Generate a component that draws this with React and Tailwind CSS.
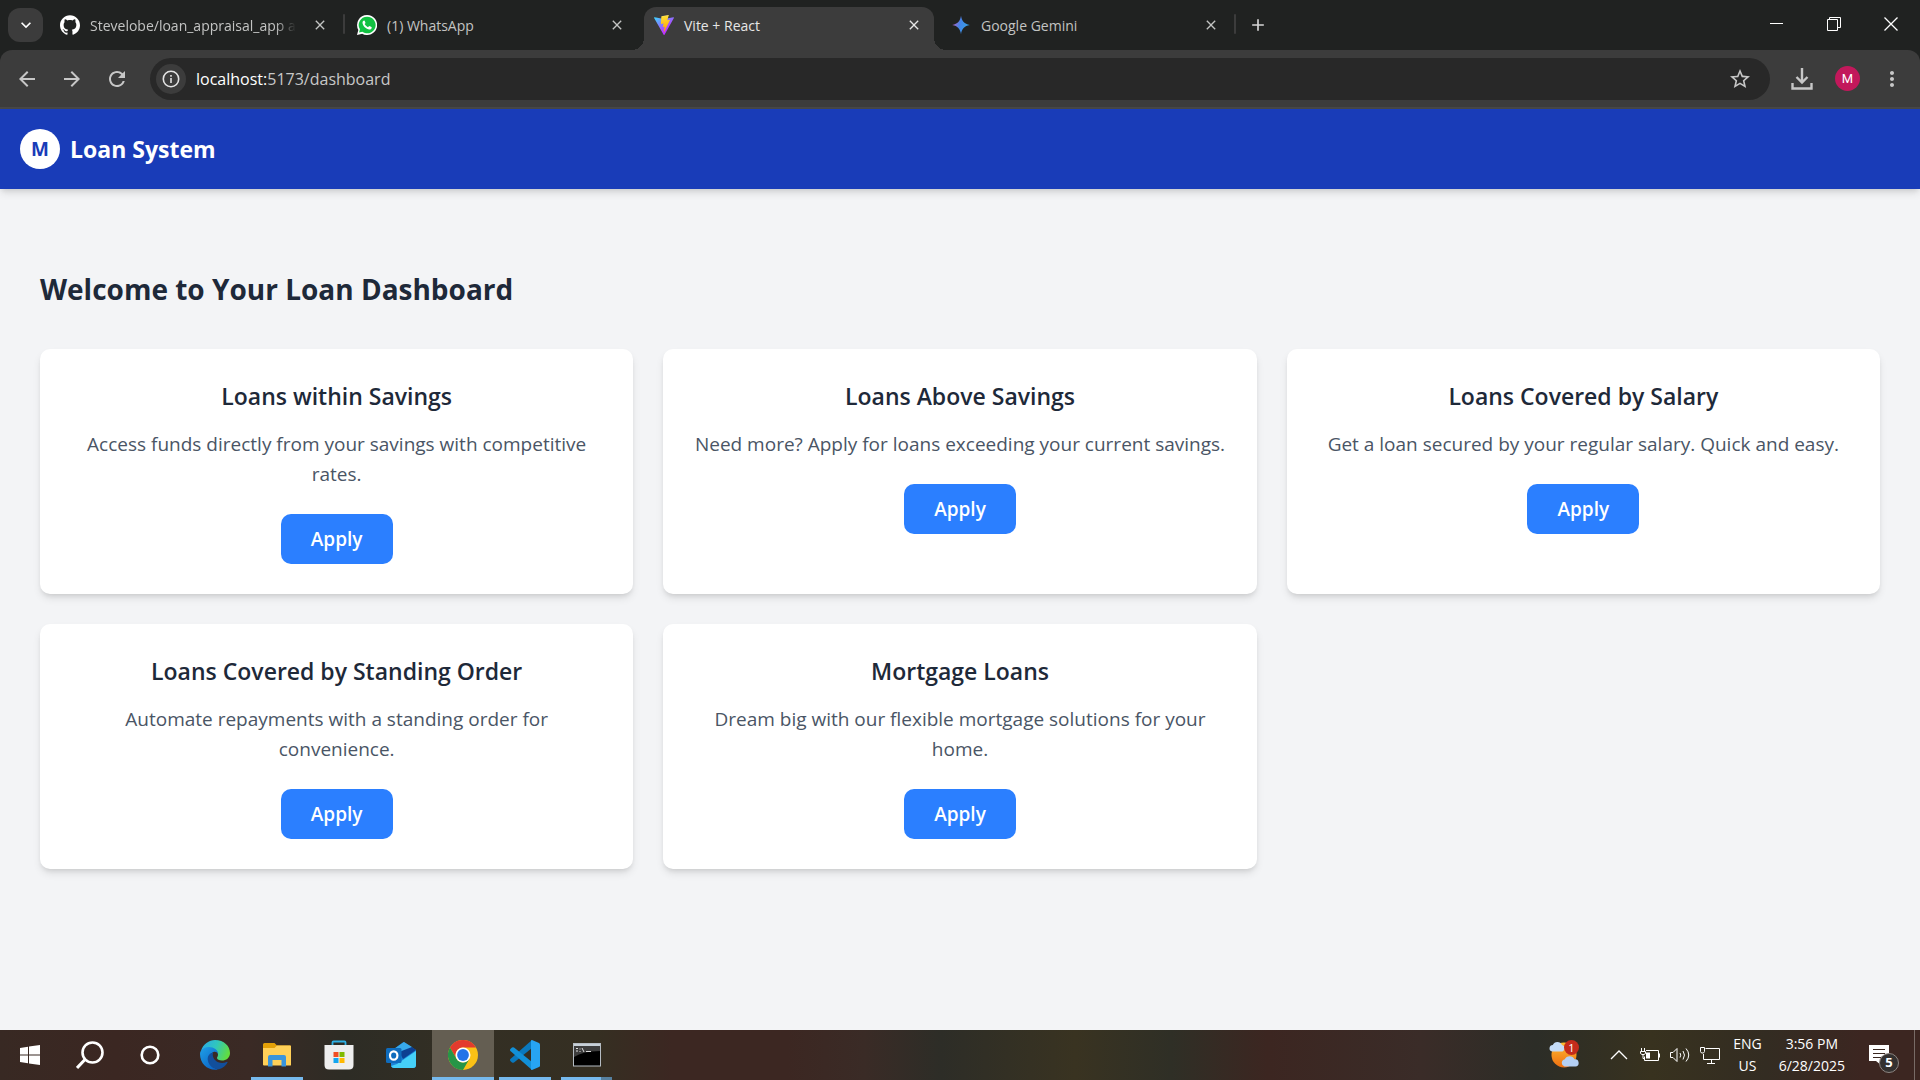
import React from "react";
import { SiGithub } from "react-icons/si";
import { MdArrowBack, MdArrowForward, MdRefresh, MdStarOutline, MdMoreVert, MdClose, MdAdd, MdExpandMore } from "react-icons/md";

const tabs = [
  { title: "Stevelobe/loan_appraisal_app a", icon: "github", divider: true },
  { title: "(1) WhatsApp", icon: "whatsapp" },
  { title: "Vite + React", icon: "vite", active: true },
  { title: "Google Gemini", icon: "gemini", divider: true },
];

const loans = [
  { title: "Loans within Savings", text: "Access funds directly from your savings with competitive rates." },
  { title: "Loans Above Savings", text: "Need more? Apply for loans exceeding your current savings." },
  { title: "Loans Covered by Salary", text: "Get a loan secured by your regular salary. Quick and easy." },
  { title: "Loans Covered by Standing Order", text: "Automate repayments with a standing order for convenience." },
  { title: "Mortgage Loans", text: "Dream big with our flexible mortgage solutions for your home." },
];

function Favicon({ name }) {
  if (name === "github") return <SiGithub className="size-5 shrink-0 text-white" />;
  if (name === "whatsapp")
    return (
      <svg viewBox="0 0 24 24" className="size-5 shrink-0">
        <path d="M12 0a12 12 0 0 0-10.400 17.900L0 24l6.200-1.600A12 12 0 1 0 12 0z" fill="#fff" />
        <path d="M12 2a10 10 0 0 0-8.500 15.200l-1 3.900 4-1A10 10 0 1 0 12 2z" fill="#12c142" />
        <path d="M8.500 6.500c-.5 0-1.900.9-1.900 2.900 0 3.400 4.700 8.100 8.100 8.100 1.900 0 3-1.300 3-2.500 0-.5-2.700-1.800-3-1.800-.4 0-1 1.400-1.500 1.400-.9 0-4-2.800-4-3.700 0-.5 1-.9 1-1.400 0-.4-.8-3-1.700-3z" fill="#fff" />
      </svg>
    );
  if (name === "vite")
    return (
      <svg viewBox="0 0 256 257" className="size-5 shrink-0">
        <defs>
          <linearGradient id="viteA" x1="-.8%" x2="57.600%" y1="7.700%" y2="78.400%">
            <stop offset="0%" stopColor="#41d1ff" />
            <stop offset="100%" stopColor="#bd34fe" />
          </linearGradient>
          <linearGradient id="viteB" x1="43.400%" x2="50.300%" y1="2.200%" y2="89%">
            <stop offset="0%" stopColor="#ffea83" />
            <stop offset="8.300%" stopColor="#ffdd35" />
            <stop offset="100%" stopColor="#ffa800" />
          </linearGradient>
        </defs>
        <path fill="url(#viteA)" d="M255.153 37.938L134.897 252.976c-2.483 4.440-8.862 4.466-11.382.048L.875 37.958c-2.746-4.814 1.371-10.646 6.827-9.670l120.385 21.517a6.537 6.537 0 0 0 2.322-.004l117.867-21.483c5.438-.991 9.574 4.796 6.877 9.620z" />
        <path fill="url(#viteB)" d="M185.432.063L96.440 17.501a3.268 3.268 0 0 0-2.634 3.014l-5.474 92.456a3.268 3.268 0 0 0 3.997 3.378l24.777-5.718c2.318-.535 4.413 1.507 3.936 3.838l-7.361 36.047c-.495 2.426 1.782 4.500 4.151 3.780l15.304-4.649c2.372-.720 4.652 1.360 4.150 3.788l-11.698 56.621c-.732 3.542 3.979 5.473 5.943 2.437l1.313-2.028 72.516-144.720c1.215-2.423-.880-5.186-3.540-4.672l-25.505 4.922c-2.396.462-4.435-1.770-3.759-4.114l16.646-57.705c.677-2.350-1.370-4.583-3.769-4.113z" />
      </svg>
    );
  return (
    <svg viewBox="0 0 24 24" className="size-5 shrink-0">
      <defs>
        <linearGradient id="gem" x1="0" x2="1" y1=".3" y2=".6">
          <stop offset="0.100" stopColor="#a866c8" />
          <stop offset=".45" stopColor="#4285e8" />
          <stop offset="1" stopColor="#35a3e0" />
        </linearGradient>
      </defs>
      <path d="M12 1c.9 6 4 10.100 10.500 11C16 12.900 12.900 17 12 23 11.100 17 8 12.900 1.500 12 8 11.100 11.100 7 12 1z" fill="url(#gem)" />
    </svg>
  );
}

function Tab({ tab }) {
  return (
    <div className="relative flex w-[297px] shrink-0 pr-[7px]">
      <div
        className={
          tab.active
            ? "relative flex min-w-0 flex-1 items-center rounded-t-xl bg-[#3c3c3c] px-[10px] pb-[7px] text-[#e6e6e6]"
            : "flex min-w-0 flex-1 items-center px-[10px] pb-[7px] text-[#c3c4c3]"
        }
      >
        {tab.active && (
          <>
            <span className="absolute bottom-0 -left-3 size-3 bg-[radial-gradient(circle_at_0_0,transparent_12px,#3c3c3c_12px)]" />
            <span className="absolute -right-3 bottom-0 size-3 bg-[radial-gradient(circle_at_100%_0,transparent_12px,#3c3c3c_12px)]" />
          </>
        )}
        <Favicon name={tab.icon} />
        <span
          className={
            tab.icon === "github"
              ? "ml-[10px] whitespace-nowrap [mask-image:linear-gradient(90deg,#000_90%,transparent)]"
              : "ml-[10px] whitespace-nowrap"
          }
        >
          {tab.title}
        </span>
        <button aria-label={"Close " + tab.title} className="ml-auto flex size-5 shrink-0 items-center justify-center">
          <MdClose className="size-4" />
        </button>
      </div>
      {tab.divider && <span className="absolute top-[7px] right-[2px] h-5 w-[2px] rounded bg-[#3c3c3c]" />}
    </div>
  );
}

function BrowserChrome() {
  return (
    <div className="bg-[#202221]">
      <div className="flex h-[50px] items-stretch pt-[7px] text-[14px]">
        <button aria-label="Search tabs" className="mt-px mr-[7px] ml-2 flex h-[34px] w-[35px] items-center justify-center rounded-xl bg-[#3c3c3c] text-white">
          <MdExpandMore className="size-5" />
        </button>
        {tabs.map((t) => (
          <Tab key={t.title} tab={t} />
        ))}
        <button aria-label="New tab" className="ml-[6px] mb-[7px] flex w-7 items-center justify-center text-[#d5d5d5]">
          <MdAdd className="size-5" />
        </button>
        <div className="mr-px mb-[9px] ml-auto flex items-center text-white">
          <button aria-label="Minimize" className="flex h-8 w-[57px] items-center justify-center">
            <svg viewBox="0 0 14 14" className="size-[14px]"><path d="M0 6.500h13" stroke="currentColor" /></svg>
          </button>
          <button aria-label="Restore" className="flex h-8 w-[57px] items-center justify-center">
            <svg viewBox="0 0 14 14" className="size-[14px]" fill="none" stroke="currentColor"><path d="M.5 2.500h10v11H.5zM2.500 2.500v-2h11v10h-3" /></svg>
          </button>
          <button aria-label="Close window" className="flex h-8 w-[57px] items-center justify-center">
            <svg viewBox="0 0 14 14" className="size-[14px]"><path d="M.5.5l13 13M13.500.5l-13 13" stroke="currentColor" strokeWidth="1.300" /></svg>
          </button>
        </div>
      </div>
      <div className="flex h-[59px] items-center rounded-t-xl border-b-2 border-[#474747] bg-[#3c3c3c] pl-[15px] text-[#c7c7c7]">
        <button aria-label="Back" className="mr-[21px]"><MdArrowBack className="size-6" /></button>
        <button aria-label="Forward" className="mr-[21px]"><MdArrowForward className="size-6" /></button>
        <button aria-label="Reload" className="mr-[21px]"><MdRefresh className="size-6" /></button>
        <div className="flex h-[42px] min-w-0 flex-1 items-center rounded-full bg-[#282828] pr-[18px] pl-[6px]">
          <button aria-label="Site information" className="flex size-[30px] shrink-0 items-center justify-center rounded-full bg-[#3c3c3c] text-[#e3e3e3]">
            <svg viewBox="0 0 18 18" className="size-[18px]" fill="none" stroke="currentColor" strokeWidth="1.600">
              <circle cx="9" cy="9" r="7.700" />
              <path d="M9 8v5M9 5v1.700" />
            </svg>
          </button>
          <a href="#dashboard" className="ml-[10px] flex-1 text-[16px]">
            <span className="text-white">localhost:</span>5173/dashboard
          </a>
          <button aria-label="Bookmark"><MdStarOutline className="size-6" /></button>
        </div>
        <button aria-label="Downloads" className="ml-5">
          <svg viewBox="0 0 24 24" className="size-6" fill="none" stroke="currentColor" strokeWidth="2.400">
            <path d="M12 1v14M6.500 10l5.500 5.500 5.500-5.500M2.500 16v5.500h19V16" />
          </svg>
        </button>
        <button aria-label="Profile" className="ml-[21px] flex size-[25px] items-center justify-center rounded-full bg-[#c2185b] font-['Roboto',sans-serif] text-[13px] text-white">M</button>
        <button aria-label="Menu" className="mr-4 ml-5"><MdMoreVert className="size-6" /></button>
      </div>
    </div>
  );
}

function LoanCard({ title, text }) {
  return (
    <article className="rounded-[10px] bg-white p-[30px] text-center shadow-[0_5px_8px_-1px_rgba(0,0,0,0.1),0_3px_5px_-2px_rgba(0,0,0,0.1)]">
      <h2 className="mb-[15px] text-[23px] leading-[35px] font-semibold text-[#1e2939]">{title}</h2>
      <p className="mb-[25px] text-[19px] leading-[30px] text-[#4a5565]">{text}</p>
      <button className="rounded-[10px] bg-[#2b7fff] px-[30px] py-[10px] text-[19px] leading-[30px] font-semibold text-white">Apply</button>
    </article>
  );
}

function EdgeIcon() {
  return (
    <svg viewBox="0 0 30 30" className="size-[30px]">
      <defs>
        <linearGradient id="edgeTop" x1="0" x2="1" y1=".2" y2=".5">
          <stop offset="0" stopColor="#2aa9e8" />
          <stop offset=".5" stopColor="#30c6bd" />
          <stop offset="1" stopColor="#62dd3e" />
        </linearGradient>
        <linearGradient id="edgeLow" x1="0" x2=".8" y1="0" y2="1">
          <stop offset="0" stopColor="#1fa0e8" />
          <stop offset="1" stopColor="#0b62c4" />
        </linearGradient>
      </defs>
      <path d="M1 11C3 4 9 0 15 0c9 0 15 6 15 13 0 5-4 7.500-8 7.500-3 0-5-1-5-2.500 0-1 1-1.500 1-3.500 0-3-3-6-8-6-4 0-7 1-9 2.500z" fill="url(#edgeTop)" />
      <path d="M0 14c0-4 4-7 9-7s9 3 9.200 7c-1-2-3-2.500-4.700-2-3 1-4.500 4-4 8 .5 4 4 8 8.500 9.500C8 31 0 24 0 14z" fill="url(#edgeLow)" />
      <path d="M13 12.500c-4 1-6 4-5 8.500 1 5 6 8.500 11 8.200 3.500-1 7-3.500 8.500-6.700.3-.8-.3-1-1-.6-5 2.400-12 .4-13.500-5.400-.4-1.500 0-3 0-4z" fill="#124f9c" />
    </svg>
  );
}

function ExplorerIcon() {
  return (
    <svg viewBox="0 0 28 24" className="h-6 w-7">
      <path d="M0 1.500Q0 0 1.500 0h10L14 2.500H27q1 0 1 1V22H0z" fill="#e3a008" />
      <path d="M0 5h11.500L14 2.500H27q1 0 1 1V22q0 .5-1 .5H1q-1 0-1-1z" fill="#ffd058" />
      <path d="M5 23.500V14q0-2 2-2h14q2 0 2 2v9.500h-4.500V17h-9v6.500z" fill="#3a95dc" />
    </svg>
  );
}

function StoreIcon() {
  return (
    <svg viewBox="0 0 30 30" className="size-[30px]">
      <path d="M8.500 6V2.500q0-1 1-1h11q1 0 1 1V6" fill="none" stroke="#2fb1e6" strokeWidth="1.800" />
      <path d="M.5 5h29v20q0 4.500-4.500 4.500H5Q.5 29.500.5 25z" fill="#eee" />
      <path d="M9.500 12h5v5h-5z" fill="#f04e23" />
      <path d="M15.500 12h5v5h-5z" fill="#7fba00" />
      <path d="M9.500 18h5v5h-5z" fill="#12a5f0" />
      <path d="M15.500 18h5v5h-5z" fill="#ffb901" />
    </svg>
  );
}

function OutlookIcon() {
  return (
    <svg viewBox="0 0 30 30" className="size-[30px]">
      <path d="M5 11L17.500 2 30 10v15q0 3-3 3H8q-3 0-3-3z" fill="#1b83d8" />
      <path d="M8 9l10-7 8 5-11 9z" fill="#38a9ea" />
      <path d="M13 12l13-5 4 3-13 9z" fill="#0d3f91" />
      <path d="M11 24l19-13v14q0 3-3 3H8q-2 0-3-2z" fill="#45d0f8" />
      <rect y="8" width="15.500" height="15" rx="1.500" fill="#0f6cbd" />
      <ellipse cx="7.700" cy="15.500" rx="3.700" ry="4.200" fill="none" stroke="#fff" strokeWidth="2.200" />
    </svg>
  );
}

function ChromeIcon() {
  return (
    <svg viewBox="0 0 30 30" className="size-[30px]">
      <circle cx="15" cy="15" r="15" fill="#fbc116" />
      <path d="M2 7.500A15 15 0 0 1 28 7.500H15a7.500 7.500 0 0 0-6.500 11.200z" fill="#e33b2e" />
      <path d="M2 7.500l6.500 11.200A7.500 7.500 0 0 0 21.500 18.800L15 30A15 15 0 0 1 2 7.500z" fill="#269547" />
      <circle cx="15" cy="15" r="7.500" fill="#fff" />
      <circle cx="15" cy="15" r="5.900" fill="#2474e8" />
    </svg>
  );
}

function CodeIcon() {
  return (
    <svg viewBox="0 0 30 30" className="size-[30px]">
      <path d="M22 0v8L4 22.500q-1 .6-2 0L.4 21q-.8-1 0-2z" fill="#0a78bd" />
      <path d="M22 30v-8L4 7.500q-1-.6-2 0L.4 9q-.8 1 0 2z" fill="#1290d8" />
      <path d="M22 0l7 3q1 .5 1 1.500v21q0 1-1 1.500l-7 3q-1 0-1-1V1q0-1 1-1z" fill="#27a4f2" />
    </svg>
  );
}

function TerminalIcon() {
  return (
    <svg viewBox="0 0 28 24" className="h-6 w-7">
      <rect x=".5" y=".5" width="27" height="22.500" fill="#000" stroke="#b5bcc3" />
      <path d="M1 1h26v2H1z" fill="#c7d0d8" />
      <path d="M1 3h26v5Q10 8 1 14z" fill="#3d3d3d" />
      <path d="M3 5.500h2M3 8h2M7 5.500v1M7 8v1M9 5l2 4M13 8.500h5" stroke="#ddd" />
    </svg>
  );
}

function TaskButton({ label, children, open, active, stacked }) {
  return (
    <button
      aria-label={label}
      className={
        active
          ? "relative flex h-full w-[62px] items-center justify-center bg-[#645e52]"
          : "relative flex h-full w-[62px] items-center justify-center"
      }
    >
      {children}
      {active && <span className="absolute inset-x-0 bottom-0 h-[3px] bg-[#76b9ed]" />}
      {open && <span className="absolute inset-x-[5px] bottom-0 h-[3px] bg-[#76b9ed]" />}
      {stacked && (
        <span className="absolute right-0 bottom-0 left-[5px] flex h-[3px]">
          <span className="w-10 bg-[#76b9ed]" />
          <span className="w-[11px] bg-[#56809f]" />
        </span>
      )}
    </button>
  );
}

function Taskbar() {
  return (
    <footer className="flex h-[50px] items-center bg-[linear-gradient(90deg,#382923_0%,#3b2722_6%,#3a2a25_13%,#2d2c25_18%,#332f24_24%,#352f22_31%,#3c2722_35%,#3c2722_41%,#3a2b26_45%,#2d2d27_49%,#393321_56%,#2f2f26_61%,#3c2621_66%,#3a2c28_74%,#2c2d27_80%,#38321f_86%,#332c22_92%,#3c2621_97%,#3c2621_100%)] text-white">
      <button aria-label="Start" className="flex w-[60px] justify-center">
        <svg viewBox="0 0 20 20" className="size-5" fill="#fff">
          <path d="M0 3l8-1.200v7.700H0zM9 1.600L20 0v9.500H9zM0 10.500h8v7.700L0 17zM9 10.500h11V20L9 18.400z" />
        </svg>
      </button>
      <button aria-label="Search" className="flex w-[60px] justify-center">
        <svg viewBox="0 0 28 28" className="size-7" fill="none" stroke="#fff" strokeWidth="2.600">
          <circle cx="16.500" cy="11.500" r="10" />
          <path d="M9 18.500L1 27" strokeWidth="3" />
        </svg>
      </button>
      <button aria-label="Cortana" className="mr-1 flex w-[60px] justify-center">
        <svg viewBox="0 0 20 20" className="size-5" fill="none" stroke="#fff" strokeWidth="2.600"><circle cx="10" cy="10" r="8.300" /></svg>
      </button>
      <TaskButton label="Edge"><EdgeIcon /></TaskButton>
      <TaskButton label="File Explorer" open><ExplorerIcon /></TaskButton>
      <TaskButton label="Store"><StoreIcon /></TaskButton>
      <TaskButton label="Outlook"><OutlookIcon /></TaskButton>
      <TaskButton label="Chrome" active><ChromeIcon /></TaskButton>
      <TaskButton label="Visual Studio Code" open><CodeIcon /></TaskButton>
      <TaskButton label="Command Prompt" stacked><TerminalIcon /></TaskButton>
      <div className="ml-auto flex h-full items-center">
        <button aria-label="Weather" className="mr-[31px]">
          <svg viewBox="0 0 30 30" className="size-[30px]">
            <defs><linearGradient id="sun" x1="0" x2="0" y1="0" y2="1"><stop offset="0" stopColor="#ffbd32" /><stop offset="1" stopColor="#ee6d10" /></linearGradient></defs>
            <circle cx="15" cy="15" r="12.500" fill="url(#sun)" />
            <path d="M3 11.500a3.300 3.300 0 0 1 .8-6.500A5 5 0 0 1 13 5a3.400 3.400 0 0 1 .5 6.500z" fill="#c4dbf7" />
            <path d="M15.500 26.500a3.700 3.700 0 0 1 .3-7.200 5.300 5.300 0 0 1 9.700 0 3.600 3.600 0 0 1 1 7.200z" fill="#b4d0f5" />
            <circle cx="22.500" cy="7.500" r="7.500" fill="#c42b1c" />
            <text x="22.500" y="11.500" textAnchor="middle" fontSize="11" fill="#fff">1</text>
          </svg>
        </button>
        <button aria-label="Show hidden icons" className="mr-3">
          <svg viewBox="0 0 18 18" className="size-[18px]" fill="none" stroke="#fff" strokeWidth="1.300"><path d="M1 13l8-8 8 8" /></svg>
        </button>
        <button aria-label="Battery" className="mr-[10px]">
          <svg viewBox="0 0 20 20" className="size-5" fill="none" stroke="#fff">
            <path d="M6 5.500h12.500v10H4.500v-4M19.500 8.500v4M1.500 3v3M4.500 3v3M.5 6.500h5v2l-1.500 1H2l-1.500-1zM3 10v3.500h2" />
            <path d="M6 7.500h4v6H6z" fill="#fff" stroke="none" />
          </svg>
        </button>
        <button aria-label="Volume" className="mr-[10px]">
          <svg viewBox="0 0 20 20" className="size-5" fill="none" stroke="#fff">
            <path d="M.5 7.500H3l4-4v13l-4-4H.5zM10 8q1.500 2 0 4.500M13 6q3 4 0 8.500M16 3.500q5.500 6.500 0 13" />
          </svg>
        </button>
        <button aria-label="Network" className="mr-[13px]">
          <svg viewBox="0 0 20 20" className="size-5" fill="none" stroke="#fff">
            <path d="M5.500 3.500h14v11h-16V9M11.500 15v3.500M7 18.500h8M.5 2.500h4v4l-1 1.500h-2L.5 6.500z" />
          </svg>
        </button>
        <button className="mr-[17px] text-center text-[14px] leading-[22px]"><span className="block">ENG</span><span className="block">US</span></button>
        <button className="mr-6 text-center text-[14px] leading-[22px]"><span className="block">3:56 PM</span><span className="block">6/28/2025</span></button>
        <button aria-label="Notifications" className="relative mr-[15px] h-9 w-[30px]">
          <svg viewBox="0 0 20 20" className="size-5"><path d="M0 0h20v16h-8v4l-5-4H0z" fill="#fff" /><path d="M4 4.500h12M4 8.500h12M4 12.500h8" stroke="#392720" /></svg>
          <span className="absolute right-0 bottom-0 flex size-5 items-center justify-center rounded-full border border-[#8c8581] bg-[#343130] text-[13px] font-bold">5</span>
        </button>
        <span className="mr-[5px] h-full w-px bg-[#786b66]" />
      </div>
    </footer>
  );
}

export default function App() {
  return (
    <div className="flex min-h-screen flex-col bg-[#f3f4f6] font-['Open_Sans','Noto_Sans',sans-serif]">
      <BrowserChrome />
      <header className="flex h-20 items-center gap-[10px] bg-[#193cb8] px-5 text-white shadow-[0_5px_8px_-1px_rgba(0,0,0,0.1),0_3px_5px_-2px_rgba(0,0,0,0.1)]">
        <span className="flex size-10 items-center justify-center rounded-full bg-white text-[19px] font-bold text-[#193cb8]">M</span>
        <span className="text-[23px] font-bold">Loan System</span>
      </header>
      <main className="flex-1 px-10 pt-20 pb-10">
        <h1 className="mb-10 text-[28px] leading-10 font-bold text-[#1e2939]">Welcome to Your Loan Dashboard</h1>
        <section className="grid grid-cols-3 gap-[30px]">
          {loans.map((loan) => (
            <LoanCard key={loan.title} {...loan} />
          ))}
        </section>
      </main>
      <Taskbar />
    </div>
  );
}
